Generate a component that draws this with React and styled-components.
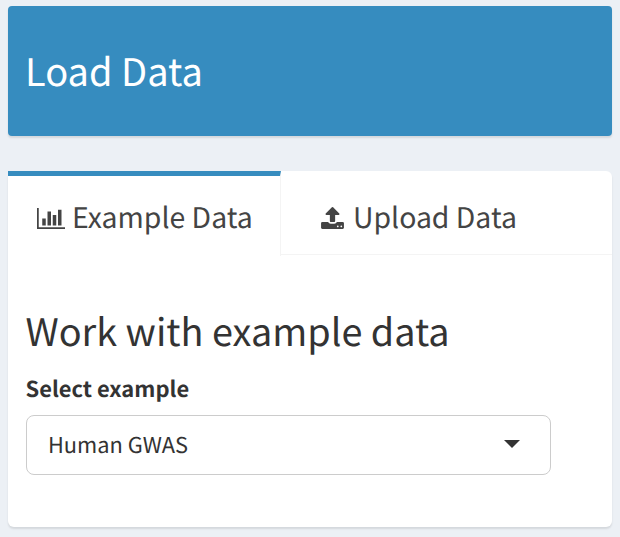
import React from "react";
import styled, { createGlobalStyle } from "styled-components";

const GlobalStyle = createGlobalStyle`
  * { box-sizing: border-box; }
  body {
    margin: 0;
    background: #ecf0f5;
    color: #333;
    font-family: "Noto Sans CJK SC", "Noto Sans", sans-serif;
    text-rendering: geometricPrecision;
  }
`;

const Page = styled.main`
  display: flex;
  flex-direction: column;
  gap: 35px;
  height: 537px;
  padding: 6px 8px 10px;
`;

const Banner = styled.header`
  display: flex;
  align-items: center;
  height: 130px;
  padding: 0 17px 2px;
  background: #368cbf;
  border-radius: 4px;
  box-shadow: 0 2px 2px rgba(0, 0, 0, 0.1);
  color: #fff;
`;

const Title = styled.h1`
  margin: 0;
  font-size: 38px;
  font-weight: 400;
  line-height: 44px;
  white-space: nowrap;
`;

const Card = styled.section`
  height: 356px;
  background: #fff;
  border-radius: 6px;
  box-shadow: 0 2px 2px rgba(0, 0, 0, 0.1);
`;

const Tabs = styled.nav`
  display: flex;
  height: 84px;
  border-bottom: 1px solid #f4f4f4;
  border-radius: 6px 6px 0 0;
`;

const Tab = styled.a`
  display: flex;
  align-items: flex-start;
  gap: ${(p) => p.$gap}px;
  width: ${(p) => (p.$active ? 273 : 331)}px;
  height: ${(p) => (p.$active ? 85 : 84)}px;
  padding: 21px 0 0 ${(p) => (p.$active ? 29 : 40)}px;
  border-top: 5px solid ${(p) => (p.$active ? "#368cbf" : "transparent")};
  border-right: ${(p) => (p.$active ? "1px solid #f4f4f4" : "0")};
  background: ${(p) => (p.$active ? "#fff" : "transparent")};
  color: #444;
  font-size: 28.4px;
  line-height: 40px;
  white-space: nowrap;
`;

const Icon = styled.svg`
  display: block;
  flex: none;
  margin-top: ${(p) => p.$top}px;
  fill: currentColor;
`;

const Panel = styled.div`
  padding: 53px 18px 0;
`;

const Heading = styled(Title).attrs({ as: "h2" })`
  margin-left: -0.5px;
  font-size: 37.8px;
`;

const Label = styled.label`
  display: block;
  margin: 22px 0 0 -0.5px;
  font-size: 21.9px;
  font-weight: 700;
  line-height: 30px;
`;

const Select = styled.div`
  display: flex;
  align-items: center;
  justify-content: space-between;
  width: 525px;
  height: 60px;
  margin-top: 11px;
  padding: 0 30px 0 21px;
  border: 1px solid #ccc;
  border-radius: 8px;
  font-size: 21.8px;
  line-height: 30px;
`;

const Caret = styled.span`
  width: 0;
  height: 0;
  margin-top: -2px;
  border: 8px solid transparent;
  border-top-color: #333;
  border-bottom: 0;
`;

const BarChart = () => (
  <Icon $top={11} width="28" height="21" viewBox="0 0 2048 1536">
    <path d="M640 768v512H384V768h256zm384-512v1024H768V256h256zm1024 1152v128H0V0h128v1408h1920zm-640-896v768h-256V512h256zm384-384v1152h-256V128h256z" />
  </Icon>
);

const Upload = () => (
  <Icon $top={10} width="23" height="22" viewBox="0 64 1664 1600">
    <path d="M1280 1472q0-26-19-45t-45-19-45 19-19 45 19 45 45 19 45-19 19-45zm256 0q0-26-19-45t-45-19-45 19-19 45 19 45 45 19 45-19 19-45zm128-224v320q0 40-28 68t-68 28H96q-40 0-68-28t-28-68v-320q0-40 28-68t68-28h427q21 56 70.5 92t110.5 36h256q61 0 110.5-36t70.5-92h427q40 0 68 28t28 68zm-325-648q-17 40-59 40h-256v448q0 26-19 45t-45 19H704q-26 0-45-19t-19-45V640H384q-42 0-59-40-17-39 14-69l448-448q18-19 45-19t45 19l448 448q31 30 14 69z" />
  </Icon>
);

export default function App() {
  return (
    <>
      <GlobalStyle />
      <Page>
        <Banner>
          <Title>Load Data</Title>
        </Banner>
        <Card>
          <Tabs>
            <Tab $active $gap={7}>
              <BarChart />
              <span>Example Data</span>
            </Tab>
            <Tab $gap={9}>
              <Upload />
              <span>Upload Data</span>
            </Tab>
          </Tabs>
          <Panel>
            <Heading>Work with example data</Heading>
            <Label>Select example</Label>
            <Select>
              <span>Human GWAS</span>
              <Caret />
            </Select>
          </Panel>
        </Card>
      </Page>
    </>
  );
}
